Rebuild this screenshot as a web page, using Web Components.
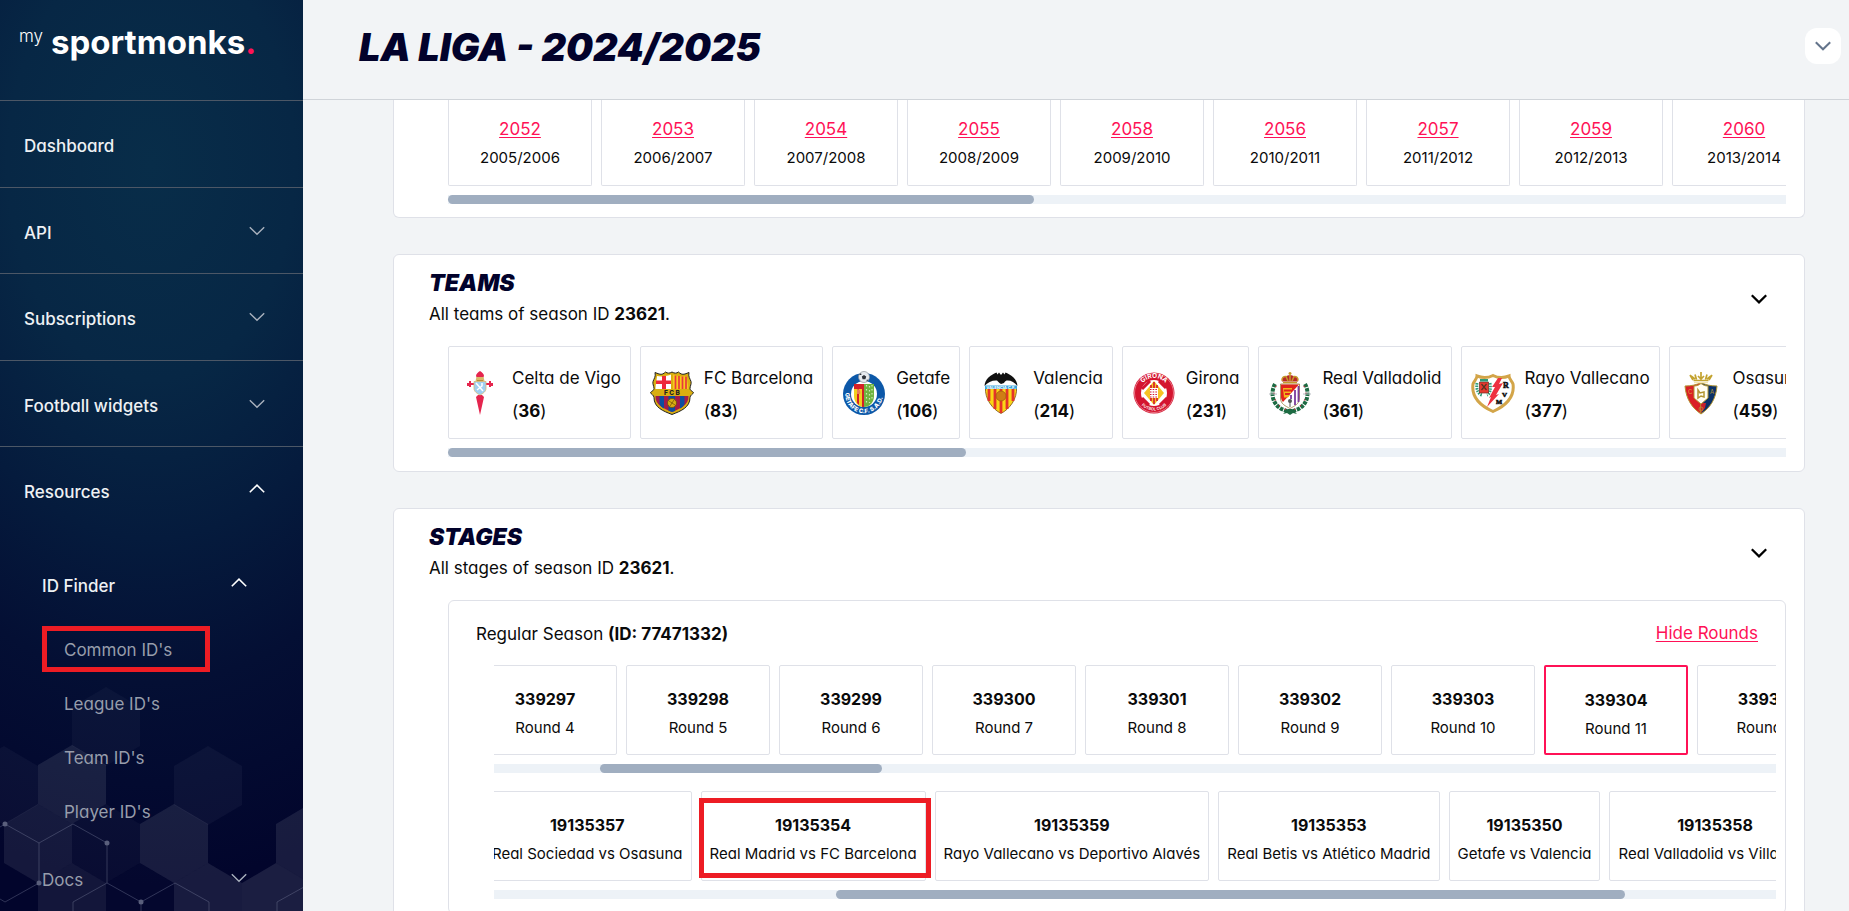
<!DOCTYPE html>
<html lang="en">
<head>
<meta charset="utf-8">
<meta name="viewport" content="width=device-width, initial-scale=1">
<title>La Liga - 2024/2025</title>
<style>
  html, body { height: 100%; margin: 0; }
  body {
    --line: #dfe1e8;
    --pink: #ff1156;
    --mark: #ed1c24;
    --navy: #02022b;
    background: #f2f4f6;
    color: #0a0a0a;
    font: 400 17px/24px Inter, "Liberation Sans", sans-serif;
    font-feature-settings: "cv11";
    overflow: hidden;
  }
</style>
</head>
<body>
<sm-app></sm-app>

<script>
const define = (name, html, setup) => customElements.define(name, class extends HTMLElement {
  connectedCallback() {
    if (this.shadowRoot) return;
    const root = this.attachShadow({ mode: 'open' });
    const template = document.createElement('template');
    template.innerHTML = typeof html === 'function' ? html(this) : html;
    root.append(template.content.cloneNode(true));
    if (setup) setup(this, root);
  }
});

/* Arrow that points down, or up with the "up" attribute */
define('sm-chevron', el => `
  <style>
    :host { display: block; width: 16px; height: 10px; }
    svg { display: block; width: 100%; height: 100%; }
  </style>
  <svg viewBox="0 0 16 10" fill="none" stroke="currentColor" stroke-width="${el.getAttribute('weight') || 1}" aria-hidden="true">
    <path d="${el.hasAttribute('up') ? 'M.8 8.3 8 1.2l7.2 7.1' : 'M.8 1.2 8 8.3l7.2-7.1'}"/>
  </svg>`);

/* Red frame laid over the thing that it points out */
define('sm-mark', `
  <style>
    :host { position: absolute; box-sizing: border-box; border: 5px solid var(--mark); pointer-events: none; }
  </style>`);

define('sm-logo', `
  <style>
    :host { display: block; height: 100px; color: #fff; }
    a { display: flex; align-items: flex-start; gap: 8px; padding: 20px 0 0 19px; color: inherit; text-decoration: none; }
    .my { padding-top: 4px; font-size: 17px; line-height: 24px; font-weight: 300; }
    .name { font-size: 33px; line-height: 44px; font-weight: 700; }
    .dot { color: var(--pink); }
  </style>
  <a href="#home"><span class="my">my</span><span class="name">sportmonks<span class="dot">.</span></span></a>`);

define('sm-nav-item', el => {
  const open = el.hasAttribute('open');
  const arrow = el.hasAttribute('expands') || open;
  const body = `<span><slot></slot></span>${arrow ? `<sm-chevron ${open ? 'up weight="1.6"' : 'weight="1.4"'}></sm-chevron>` : ''}`;
  return `
  <style>
    :host { display: block; color: #eef1f4; font-weight: 500; }
    :host([level="1"]) { border-top: 1px solid #4c5766; }
    :host([level="2"]), :host([level="3"]) { height: 54px; }
    :host([level="3"]), :host([dim]) { color: #979dab; font-weight: 400; }
    a, button {
      display: flex; align-items: center; justify-content: space-between;
      box-sizing: border-box; width: 100%; height: 100%; margin: 0; border: 0;
      padding: 0 38px 0 24px; background: none; color: inherit; font: inherit;
      font-feature-settings: inherit; text-align: left; text-decoration: none;
    }
    :host([level="2"]) :is(a, button) { padding: 0 56px 0 42px; }
    :host([level="3"]) :is(a, button) { padding: 0 38px 0 64px; }
    span { padding-top: 4px; }
    sm-chevron { color: #a9b1bd; }
    :host([open]) sm-chevron { color: #fff; margin-bottom: 2px; }
  </style>
  ${arrow ? `<button type="button" aria-expanded="${open}">${body}</button>` : `<a href="#page">${body}</a>`}`;
});

/* Honeycomb pattern at the foot of the side bar */
define('sm-honeycomb', () => {
  const hex = (x, y, o) => `<path fill="#fff" fill-opacity="${o}" d="M${x} ${y - 40}l34 20v39l-34 20-34-20v-39z"/>`;
  return `
  <style>
    :host { position: absolute; left: 0; bottom: 0; width: 303px; height: 231px; }
    svg { display: block; }
  </style>
  <svg width="303" height="231" viewBox="0 680 303 231" aria-hidden="true">
    ${[[106, 727, .03], [72, 785, .09], [4, 786, .035], [38, 844, .08], [208, 786, .04], [174, 844, .09], [106, 844, .03], [310, 844, .09], [72, 903, .07], [208, 903, .09], [276, 903, .1], [140, 903, .01]].map(h => hex(...h)).join('')}
    <g fill="none" stroke="#8f95b0" stroke-opacity=".32">
      <path d="M0 827l5-3 34 19 34-19 34 19v40l-34 19v10M39 843v40L5 902l-5-3M107 883l34 19 34-19 34 19v10M141 902v10M277 912v-10l27-15"/>
    </g>
    <g fill="#5a5f7c"><circle cx="5" cy="824" r="2.5"/><circle cx="107" cy="843" r="2.5"/><circle cx="39" cy="883" r="2.5"/><circle cx="141" cy="902" r="2.5"/></g>
  </svg>`;
});

define('sm-sidebar', `
  <style>
    :host {
      display: block; position: relative; box-sizing: border-box; width: 303px; height: 100%; overflow: hidden;
      background:
        radial-gradient(ellipse 480px 720px at 50% 18%, #082d49 0, #072745 30%, #051b3d 52%, #040f34 72%, #02052c 100%);
    }
    nav { position: relative; }
    .top { display: grid; grid-auto-rows: 87px 86px; }
    .sub { padding-top: 24px; }
    .leaves { padding: 10px 0 14px; }
    .leaf { position: relative; }
    .leaf sm-mark { inset: 5px 93px 3px 42px; }
  </style>
  <sm-honeycomb></sm-honeycomb>
  <nav aria-label="Main">
    <sm-logo></sm-logo>
    <div class="top">
      <sm-nav-item level="1">Dashboard</sm-nav-item>
      <sm-nav-item level="1" expands>API</sm-nav-item>
      <sm-nav-item level="1" expands>Subscriptions</sm-nav-item>
      <sm-nav-item level="1" expands>Football widgets</sm-nav-item>
      <sm-nav-item level="1" open>Resources</sm-nav-item>
    </div>
    <div class="sub">
      <sm-nav-item level="2" open>ID Finder</sm-nav-item>
      <div class="leaves">
        <div class="leaf"><sm-nav-item level="3">Common ID's</sm-nav-item><sm-mark></sm-mark></div>
        <sm-nav-item level="3">League ID's</sm-nav-item>
        <sm-nav-item level="3">Team ID's</sm-nav-item>
        <sm-nav-item level="3">Player ID's</sm-nav-item>
      </div>
      <sm-nav-item level="2" expands dim>Docs</sm-nav-item>
    </div>
  </nav>`);

define('sm-header', `
  <style>
    :host {
      display: flex; align-items: center; justify-content: space-between; box-sizing: border-box;
      height: 100px; padding: 0 8px 8px 56px; border-bottom: 1px solid #d0d4d9;
    }
    h1 { margin: 0; padding-top: 2px; color: var(--navy); font-size: 38px; line-height: 48px; font-weight: 900; font-style: italic; text-transform: uppercase; }
    button { display: grid; place-items: center; width: 36px; height: 36px; padding: 0; border: 0; border-radius: 12px; background: #fff; color: #64748b; }
  </style>
  <h1><slot></slot></h1>
  <button type="button" aria-label="Account menu"><sm-chevron weight="2"></sm-chevron></button>`);

/* White card; "continued" is one whose head is scrolled out of view */
define('sm-card', el => `
  <style>
    :host { display: block; box-sizing: border-box; border: 1px solid var(--line); border-radius: 6px; background: #fff; padding: 0 18px 14px 54px; }
    :host([continued]) { border-top: 0; border-radius: 0 0 6px 6px; padding-bottom: 13px; }
    header { display: flex; justify-content: space-between; align-items: center; height: 91px; margin-left: -19px; padding-right: 19px; box-sizing: border-box; }
    .text { padding-bottom: 4px; }
    h2 { margin: 0; color: var(--navy); font-size: 23px; line-height: 32px; font-weight: 900; font-style: italic; text-transform: uppercase; }
    p { margin: 0; line-height: 31px; }
    button { display: block; padding: 0; border: 0; background: none; color: #000; margin-bottom: 4px; }
  </style>
  ${el.hasAttribute('continued') ? '' : `
  <header>
    <div class="text"><h2>${el.getAttribute('heading')}</h2><p><slot name="note"></slot></p></div>
    <button type="button" aria-label="Collapse ${el.getAttribute('heading')}"><sm-chevron weight="2.3"></sm-chevron></button>
  </header>`}
  <slot></slot>`);

/* Sideways strip of cells with its scroll bar */
define('sm-strip', el => `
  <style>
    :host { display: block; min-width: 0; }
    .view { overflow: hidden; }
    .row { display: flex; gap: 9px; width: max-content; margin-left: calc(0px - ${el.getAttribute('scrolled') || 0}px); }
    .track { height: 9px; margin-top: 9px; background: #edf2f7; }
    .thumb { height: 9px; width: ${el.getAttribute('size')}; margin-left: ${el.getAttribute('from') || '0'}; border-radius: 5px; background: #a0aec0; }
  </style>
  <div class="view"><div class="row"><slot></slot></div></div>
  <div class="track"><div class="thumb"></div></div>`);

define('sm-cell', `
  <style>
    :host {
      display: block; position: relative; box-sizing: border-box; flex: none; min-width: 144px; height: 90px;
      padding: 21px 8px 0; border: 1px solid var(--line); border-radius: 2px;
      font-size: 15px; line-height: 24px; text-align: center; white-space: nowrap;
    }
    :host([selected]) { border: 2px solid var(--pink); }
    :host([cut]) { height: 86px; padding-top: 17px; border-top: 0; border-radius: 0 0 2px 2px; }
    .id { display: block; margin-bottom: 5px; font-size: 16px; font-weight: 700; }
    ::slotted(a) { color: var(--pink); font-size: 17px; font-weight: 400; text-decoration: underline 1px; text-underline-offset: 2px; }
    sm-mark { inset: 6px -6px 2px -3px; }
  </style>
  <span class="id"><slot name="id"></slot></span>
  <span><slot></slot></span>`,
  (el, root) => { if (el.hasAttribute('marked')) root.append(document.createElement('sm-mark')); });

const CRESTS = {
  celta: `
    <path fill="#e5254e" d="M22 0c2 1 4 3 4 5h-8c0-2 2-4 4-5zM20 24h4l2 2-4 18-4-18z"/>
    <path fill="none" stroke="#e5254e" stroke-width="2" d="M11 13h5M28 13h5M12 10v6M32 10v6M10 12v3M34 12v3"/>
    <path fill="#e5254e" d="M18 5h8l-1 2h-6z"/>
    <path fill="#d9b96a" d="M18.500 6h7l1 4h-9z"/><path fill="#b98f3c" d="M19 9h6v1.500h-6z"/>
    <path fill="#9fd0f1" stroke="#d7b873" stroke-width=".8" d="M16 10.500h12v7c0 3-3 5-6 6.500-3-1.500-6-3.500-6-6.500z"/>
    <path fill="none" stroke="#fff" stroke-width="1.500" d="m18 12 7 8M24 12v3l-5 4"/>`,
  barca: `
    <path fill="#d9ae10" stroke="#222" d="M5 1.500 9 3c3 1 5-.5 6.500-2 2 1.500 4 1.500 6.500 0 2.500 1.500 4.500 1.500 6.500 0C30 2.500 32 4 35 3l4-1.500c-1 4 1 6 2 9 .7 2.500-1 4.500-1 7 0 2 2 2.500 3.500 4-.5 2-3.500 2.500-3.500 5 0 10-9 13.500-18 17C13 40 4 36.500 4 26.500c0-2.500-3-3-3.500-5C2 20 4 19.500 4 17.500c0-2.500-1.700-4.500-1-7 1-3 3-5 2-9z"/>
    <path fill="#fff" d="M7 5c5 1 11 0 14-1.500V18H5.500c0-4 1-7 1.500-13z"/>
    <path fill="#ed2939" d="M12 5h4v13h-4zM6 9.500h15v3.500H6z"/>
    <path fill="#f7c81e" d="M23 3.500C26 5 32 6 37 5c0 6 1.500 9 1.500 13H23z"/>
    <path stroke="#e8393b" stroke-width="1.700" d="M25.500 4.500V18M29 5v13M32.500 5.500V18M36 5.500V18"/>
    <path fill="#a21b4a" d="M5.500 25h33c.5 9-8 12.500-16.500 16C13.500 37.500 5 34 5.500 25z"/>
    <path fill="#0b4ea0" d="M9.500 25H14v12.500c-2-1-3.500-2.500-4.500-4.500zM18.500 25h6.500v15l-3 1-3.500-1.300zM30 25h4.500v8c-1 2-2.500 3.500-4.500 4.500z"/>
    <circle cx="22" cy="32" r="4.500" fill="#d9ae10" stroke="#6b4b08" stroke-width=".8"/><path fill="none" stroke="#6b4b08" stroke-width=".7" d="m19 30 6 4M20 35l4-6"/>
    <text x="22" y="23.800" font-size="6.500" font-weight="800" text-anchor="middle" fill="#222">F C B</text>`,
  getafe: `
    <circle cx="22" cy="23" r="21" fill="#0c58a8"/><circle cx="22" cy="23" r="13" fill="#fff"/>
    <path fill="#f2cf1f" d="M12 13h10v23c-6 0-10-5-10-11z"/><path fill="#d42027" d="M12 13h10v5H12zM15 18h2v16l-2-2zM20 18h2v18h-2z"/>
    <path fill="#e87e5a" d="M15 18c3 0 4 3 3 5h-3z"/>
    <path fill="#6fb43f" d="M22 13h10v12c0 6-4 11-10 11z"/><path stroke="#cfe8b8" stroke-width="1.200" stroke-dasharray="1.500 2.500" d="M24.500 14v20M27.500 15v17M30 14v16"/>
    <circle cx="22" cy="6" r="5.500" fill="#e7eaee" stroke="#8a8f96" stroke-width=".7"/><path fill="#30343a" d="m22 4 2.200 1.600-.8 2.600h-2.800l-.8-2.600zM17 4l2-2 .5 2zM26.500 9l-2 1.500.300-2z"/>
    <path id="g" fill="none" d="M3.500 20a18.800 18.800 0 1 0 37 0"/>
    <text font-size="6" font-weight="800" fill="#fff"><textPath href="#g" startOffset="2">GETAFE C.F. S.A.D.</textPath></text>`,
  valencia: `
    <path fill="#f9d616" stroke="#7a4a10" stroke-width=".8" d="M6.500 16h31c1 12-7 22-15.500 26.500C13.500 38 5.500 28 6.500 16z"/>
    <path stroke="#e5332a" stroke-width="2.800" d="M10 18v12M16 18v20M22 18v24M28 18v20M34 18v12"/>
    <circle cx="22" cy="25" r="5" fill="#cf7d15" stroke="#9c5a0d" stroke-width=".7"/>
    <path fill="#fff" d="M6.500 15C8 11 14 8 22 8s14 3 15.500 7z"/>
    <path fill="#3aa4dc" d="M6 14.500h32V18H6z"/>
    <text x="22" y="17.700" font-size="4" font-weight="700" text-anchor="middle" fill="#fff">VALENCIA C.F.</text>
    <path fill="#111" d="M5.500 15c.5-7 6-11 12-13.500l1 2 1.500-2 2 2.500 2-2.500 1.500 2 1-2c6 2.500 11.500 6.500 12 13.500-3-4-7-6-11-5.500-1 .5-2 1.500-2.500 2.500L22 13l-1.500-1-2.500-2.500C14 9 8.500 11 5.500 15z"/>`,
  girona: `
    <circle cx="22" cy="22" r="20.500" fill="#d4152f"/><circle cx="22" cy="22" r="19.500" fill="none" stroke="#f3b6bf" stroke-width=".6"/>
    <circle cx="22" cy="22" r="13" fill="#fff"/>
    <path stroke="#d4152f" stroke-width="3" d="m10 18 8-8M28 34l7-7M10 27l7 7M27 10l7 7"/>
    <path fill="#f6c224" d="m22 10 10 12-10 12-10-12z"/><path stroke="#d4152f" stroke-width="1.600" d="M19 14v16M22 11v22M25 14v16"/>
    <path fill="#fff" d="M18 17h8v10h-8z"/><path stroke="#d4152f" stroke-width="1.200" stroke-dasharray="1.500 1.200" d="M18 18.500h8M18 21h8M18 23.500h8M18 26h8"/>
    <path id="a" fill="none" d="M7.500 17.500a15.200 15.200 0 0 1 29 0"/><path id="b" fill="none" d="M5 27a17.800 17.800 0 0 0 34 0"/>
    <text font-size="6.500" font-weight="700" fill="#fff" text-anchor="middle"><textPath href="#a" startOffset="50%">GIRONA</textPath></text>
    <text font-size="4" font-weight="600" fill="#fff" text-anchor="middle"><textPath href="#b" startOffset="50%">FUTBOL CLUB</textPath></text>`,
  valladolid: `
    <path fill="none" stroke="#1d6b43" stroke-width="4" stroke-dasharray="3.500 1" d="M7 13C1 24 6 38 20 40M37 13c6 11 1 25-13 27"/>
    <path fill="none" stroke="#c0283c" stroke-width="1.500" stroke-dasharray="1 6" d="M8 15C3 25 8 36 20 39M36 15c5 10 0 21-12 24"/>
    <path fill="#1d6b43" d="m20 38 4 0 5 5-4-1-3 2-3-2-4 1z"/>
    <path fill="#fff" stroke="#8a6d20" stroke-width=".7" d="M12.500 13h19v14c0 6-5 8-9.500 10.500C17.500 35 12.500 33 12.500 27z"/>
    <path fill="#e0241c" d="M13 13.500h18L15 31c-1.500-2-2-3-2-5z"/>
    <path fill="#f4b71c" d="M15 17h9v1.500h-8v2h7V22h-6v2h5l-2 2.500h-4z"/>
    <path stroke="#7b3a9c" stroke-width="1.800" d="M27 19v15M30.500 15v16M23 24v4"/>
    <path stroke="#b8bcc2" d="M1 23h8M35 23h8"/>
    <circle cx="22" cy="30" r="2" fill="#555"/><path stroke="#555" d="M22 31v5"/>
    <path fill="#b7282a" d="M14 10.500c-1-3 1.500-5 4-5 1-.8 2-1.200 4-1.200s3 .4 4 1.200c2.500 0 5 2 4 5z"/>
    <path fill="none" stroke="#c59a2a" stroke-width="1.500" d="M15 11.500h14M14.500 10c-1.500-3 1-5 4-4.500M29.500 10c1.500-3-1-5-4-4.500M22 10V1M20.500 2.500h3M18 5.500 20 10M26 5.500 24 10"/>`,
  rayo: `
    <path fill="#fff" stroke="#d3a549" stroke-width="3" d="M6 5c5 2 11 2 16-.5C27 7 33 7 38 5c0 3 3 5 4 8 2 14-8 22-20 27.500C10 35 0 27 2 13c1-3 4-5 4-8z"/>
    <path fill="none" stroke="#2e9c78" stroke-width="3" stroke-dasharray="1.500 1" d="M6 12c-1 6 1 11 5 12M19 12c1 6 0 11-3 12"/>
    <path fill="#e63a30" stroke="#6a2a20" stroke-width=".7" d="M8.500 11h9v11h-9z"/><path fill="#2e9c78" d="M9 8h8v2.500H9z"/><path stroke="#532" stroke-width="1.200" d="m10.500 13 5 6M15.500 13l-5 6"/>
    <path fill="#ee3040" d="M27 7h4l-3 6 4-1-7 12 3-1-12 13 4-10-2 1 6-11h-3z"/>
    <text x="32" y="17" font-size="8" font-weight="900" fill="#111" stroke="#111" stroke-width=".6" font-family="Liberation Serif, serif">R</text>
    <text x="31" y="25.500" font-size="7" font-weight="900" fill="#111" stroke="#111" stroke-width=".6" font-family="Liberation Serif, serif">V</text>
    <text x="25" y="33" font-size="6.500" font-weight="900" fill="#111" stroke="#111" stroke-width=".6" font-family="Liberation Serif, serif">M</text>`,
  osasuna: `
    <path fill="#da1f26" stroke="#b39532" d="M6 15c6 0 11-1 16-3.500V43C13 37 7 28 6 15z"/>
    <path fill="#0b3168" stroke="#b39532" d="M38 15c-6 0-11-1-16-3.500V43c9-6 15-15 16-28z"/>
    <path fill="#da1f26" d="M22 32h5l-1 5-4 5z" opacity=".9"/>
    <path fill="#fffdf4" stroke="#b39532" d="M15 15c3 0 5-1 7-2.500C24 14 26 15 29 15v12l-7 6-7-6z"/>
    <path fill="none" stroke="#b39532" stroke-width="1.500" d="m19 19 2 3 4-1v5l-3-1-3 2z"/>
    <path fill="none" stroke="#c3a330" stroke-width="1.700" d="M14.500 9.500h15M14 9l-3-5M17.500 8.500 16 3.500M22 8.500V1M26.500 8.500 28 3.500M30 9l3-5M12 5l4 3M32 5l-4 3M19 5l3 3 3-3"/>
    <path fill="#f3e6b0" d="M15 11h14v1.200H15z"/>
    <text x="9" y="23" font-size="6" fill="#d8a23a">C</text><text x="31" y="23" font-size="6" fill="#b39532">A</text>
    <circle cx="22" cy="38" r="2" fill="none" stroke="#b39532" stroke-width=".8"/>`
};

define('sm-team', el => `
  <style>
    :host {
      display: flex; align-items: center; gap: 10px; box-sizing: border-box; flex: none;
      height: 93px; padding: 0 9px; border: 1px solid var(--line); border-radius: 2px; white-space: nowrap;
    }
    svg { display: block; flex: none; width: 44px; height: 44px; }
    div { line-height: 33px; padding-top: 4px; }
    p { margin: 0; }
  </style>
  <svg viewBox="0 0 44 44" fill="none" aria-hidden="true">${CRESTS[el.getAttribute('crest')]}</svg>
  <div><p><slot></slot></p><p>(<b>${el.getAttribute('number')}</b>)</p></div>`);

define('sm-stage', `
  <style>
    :host { display: block; box-sizing: border-box; border: 1px solid var(--line); border-radius: 6px; padding: 0 9px 14px 45px; }
    header { display: flex; justify-content: space-between; align-items: center; height: 64px; margin-left: -18px; padding-right: 18px; }
    .name { padding-top: 2px; }
    .strips { display: grid; grid-template-columns: minmax(0, 1fr); gap: 18px; }
    button { padding: 0; border: 0; background: none; color: var(--pink); font: inherit; font-feature-settings: inherit; text-decoration: underline 1px; text-underline-offset: 2px; }
  </style>
  <header><span class="name"><slot name="title"></slot></span><button type="button">Hide Rounds</button></header>
  <div class="strips"><slot></slot></div>`);

const seasons = [[2052, '2005/2006'], [2053, '2006/2007'], [2054, '2007/2008'], [2055, '2008/2009'], [2058, '2009/2010'], [2056, '2010/2011'], [2057, '2011/2012'], [2059, '2012/2013'], [2060, '2013/2014']];
const teams = [['celta', 36, 'Celta de Vigo'], ['barca', 83, 'FC Barcelona'], ['getafe', 106, 'Getafe'], ['valencia', 214, 'Valencia'], ['girona', 231, 'Girona'], ['valladolid', 361, 'Real Valladolid'], ['rayo', 377, 'Rayo Vallecano'], ['osasuna', 459, 'Osasuna']];
const rounds = [4, 5, 6, 7, 8, 9, 10, 11, 12];
const fixtures = [[19135357, 'Real Sociedad vs Osasuna'], [19135354, 'Real Madrid vs FC Barcelona'], [19135359, 'Rayo Vallecano vs Deportivo Alavés'], [19135353, 'Real Betis vs Atlético Madrid'], [19135350, 'Getafe vs Valencia'], [19135358, 'Real Valladolid vs Villarreal']];

define('sm-app', `
  <style>
    :host { display: grid; grid-template-columns: 303px minmax(0, 1fr); height: 100vh; }
    main { display: flex; flex-direction: column; min-width: 0; min-height: 0; }
    .page { display: flex; flex-direction: column; gap: 36px; flex: 1; min-height: 0; overflow-y: auto; scrollbar-width: none; padding: 0 44px 0 90px; }
    .page > * { flex: none; }
  </style>
  <sm-sidebar></sm-sidebar>
  <main>
    <sm-header>La Liga - 2024/2025</sm-header>
    <div class="page">
      <sm-card continued>
        <sm-strip size="43.8%">
          ${seasons.map(([id, years]) => `<sm-cell cut><a slot="id" href="#season-${id}">${id}</a>${years}</sm-cell>`).join('')}
        </sm-strip>
      </sm-card>
      <sm-card heading="Teams">
        <span slot="note">All teams of season ID <b>23621</b>.</span>
        <sm-strip size="38.7%">
          ${teams.map(([crest, id, name]) => `<sm-team crest="${crest}" number="${id}">${name}</sm-team>`).join('')}
        </sm-strip>
      </sm-card>
      <sm-card heading="Stages">
        <span slot="note">All stages of season ID <b>23621</b>.</span>
        <sm-stage>
          <span slot="title">Regular Season <b>(ID: 77471332)</b></span>
          <sm-strip scrolled="21" from="8.3%" size="22%">
            ${rounds.map(n => `<sm-cell ${n === 11 ? 'selected' : ''}><span slot="id">${339293 + n}</span>Round ${n}</sm-cell>`).join('')}
          </sm-strip>
          <sm-strip scrolled="11" from="26.7%" size="61.5%">
            ${fixtures.map(([id, name], i) => `<sm-cell ${i === 1 ? 'marked' : ''}><span slot="id">${id}</span>${name}</sm-cell>`).join('')}
          </sm-strip>
        </sm-stage>
      </sm-card>
    </div>
  </main>`);
</script>
</body>
</html>
